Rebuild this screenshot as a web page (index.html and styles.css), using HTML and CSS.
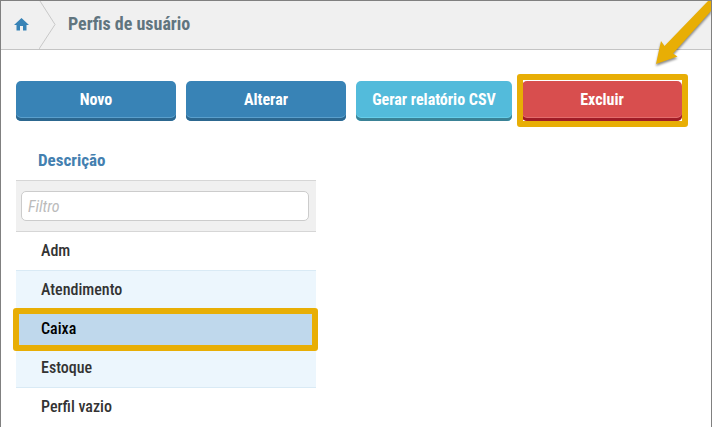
FILE: index.html
```html
<!DOCTYPE html>
<html lang="pt-BR">
<head>
    <meta charset="UTF-8">
    <meta name="viewport" content="width=device-width, initial-scale=1.0">
    <title>Perfis de usuário</title>
    <link rel="stylesheet" href="styles.css">
</head>
<body>
    <header class="breadcrumb">
        <a href="#" class="home" aria-label="Início">
            <svg width="15" height="13" viewBox="0 0 15 13">
                <path d="M7.500 0 L15 7 H12.500 V12.500 H9 V8 H6 V12.500 H2.500 V7 H0 Z" fill="#3883b6"/>
            </svg>
        </a>
        <svg class="separator" width="18" height="48" viewBox="0 0 18 48">
            <path d="M1 0 L16 23.500 L0 48" fill="none" stroke="#c8c8c8"/>
        </svg>
        <h1>Perfis de usuário</h1>
    </header>

    <main>
        <div class="actions">
            <button type="button" class="btn">Novo</button>
            <button type="button" class="btn">Alterar</button>
            <button type="button" class="btn btn-info">Gerar relatório CSV</button>
            <div class="marked">
                <button type="button" class="btn btn-danger">Excluir</button>
            </div>
        </div>

        <table class="profiles">
            <thead>
                <tr>
                    <th><label for="filter">Descrição</label></th>
                </tr>
                <tr class="filter-row">
                    <td><input type="text" id="filter" placeholder="Filtro"></td>
                </tr>
            </thead>
            <tbody>
                <tr><td>Adm</td></tr>
                <tr class="odd first"><td>Atendimento</td></tr>
                <tr class="selected"><td>Caixa</td></tr>
                <tr class="odd last"><td>Estoque</td></tr>
                <tr><td>Perfil vazio</td></tr>
            </tbody>
        </table>
    </main>

    <!-- arrow pointing at the delete button -->
    <svg class="arrow" width="62" height="72" viewBox="0 0 62 72">
        <path d="M59 0 L15.500 45 L12 40 L7 63 L28.500 55.500 L24 52.500 L62 10 V0 Z" fill="#e8ae05"/>
    </svg>
</body>
</html>
```

FILE: styles.css
```css
* {
    box-sizing: border-box;
}

body {
    position: relative;
    margin: 0;
    min-height: 100vh;
    border: 1px solid #808080;
    background-color: #fff;
    color: #333;
    font-family: "Roboto Condensed", Roboto, "Liberation Sans", sans-serif;
    font-size: 16px;
    font-weight: bold;
}

.breadcrumb {
    display: flex;
    align-items: center;
    height: 49px;
    background-color: #f0f0f0;
    border-bottom: 1px solid #c4c4c4;
}

.home {
    display: flex;
    padding: 0 10px 2px 13px;
}

h1 {
    margin: 0;
    padding: 0 0 2px 11px;
    color: #60757f;
    font-size: 18px;
    line-height: 24px;
}

main {
    padding: 31px 15px 0;
}

.actions {
    display: flex;
    gap: 10px;
}

.btn {
    width: 160px;
    height: 40px;
    padding: 0 0 4px;
    border: none;
    border-radius: 5px;
    background-color: #3883b6;
    box-shadow: inset 0 -3px #2c678f, inset 0 -4px #5a9fcc;
    color: #fff;
    font: inherit;
    white-space: nowrap;
    cursor: pointer;
}

.btn-info {
    width: 156px;
    background-color: #53bbdb;
    box-shadow: inset 0 -3px #3a8296, inset 0 -4px #66cee9;
}

.btn-danger {
    background-color: #d84e4e;
    box-shadow: inset 0 -3px #a01c26, inset 0 -4px #e36c6c;
}

.marked {
    position: relative;
}

.marked::after,
.selected td::after {
    content: "";
    position: absolute;
    border: 6px solid #e8ae05;
    border-radius: 3px;
    pointer-events: none;
}

.marked::after {
    inset: -7px -6px -6px -5px;
}

.profiles {
    width: 300px;
    margin-top: 20px;
    border-spacing: 0;
}

.profiles th {
    height: 39px;
    padding: 0 22px 2px;
    color: #4480b0;
    font-size: 17px;
    text-align: left;
}

.profiles td {
    height: 39px;
    padding: 0 25px 2px;
    font-weight: 500;
}

.profiles .filter-row td {
    height: 52px;
    padding: 0 7px 0 5px;
    background-color: #f0f0f0;
    border-top: 1px solid #d6d6d6;
    border-bottom: 1px solid #d6d6d6;
}

.filter-row input {
    display: block;
    width: 100%;
    height: 30px;
    padding: 0 6px;
    border: 1px solid #ccc;
    border-radius: 5px;
    background-color: #fff;
    font-family: inherit;
    font-size: 16px;
    font-weight: normal;
}

.filter-row input::placeholder {
    color: #bbb;
    font-style: italic;
}

.profiles tbody tr:first-child td {
    height: 38px;
}

.odd td {
    background-color: #ecf6fd;
}

.profiles .first td {
    height: 40px;
    border-top: 1px solid #d9eaf5;
}

.last td {
    border-bottom: 1px solid #d9eaf5;
}

.selected td {
    position: relative;
    background-color: #bfd8ec;
    color: #000;
}

.selected td::after {
    inset: -2px -2px -2px -3px;
}

.arrow {
    position: absolute;
    top: 0;
    right: 0;
    filter: drop-shadow(0 2px 1px rgba(0, 0, 0, 0.45));
}
```
